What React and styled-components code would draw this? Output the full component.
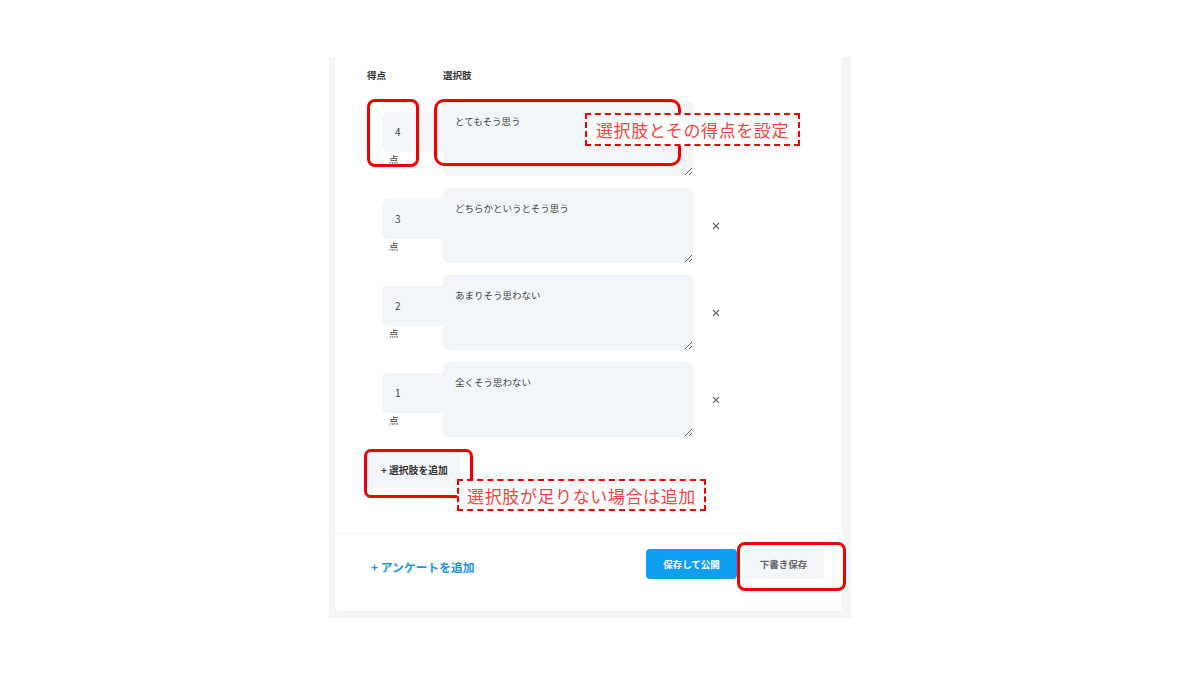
import styled, { createGlobalStyle } from 'styled-components';

const GlobalStyle = createGlobalStyle`
  body {
    margin: 0;
    background: #fff;
    font-family: "Noto Sans CJK JP", "Noto Sans", sans-serif;
  }
`;

const Page = styled.div`
  padding: 57px 0 0 329px;
`;

const Frame = styled.div`
  width: 507px;
  padding: 0 9px 7px 6px;
  background: #f5f5f5;
`;

const Card = styled.div`
  position: relative;
  background: #fff;
  border-radius: 0 0 4px 4px;
`;

const Body = styled.div`
  padding: 11px 0 45px 32px;
`;

const HeaderRow = styled.div`
  display: flex;
  font-size: 9.5px;
  font-weight: 700;
  line-height: 14px;
  color: #333;
`;

const HeadCell = styled.div`
  width: ${p => p.$w || 'auto'};
`;

const ChoiceList = styled.div`
  display: flex;
  flex-direction: column;
  gap: 12px;
  margin-top: 19px;
`;

const ChoiceRow = styled.div`
  display: flex;
  align-items: center;
  height: 75px;
`;

const ScoreCol = styled.div`
  width: 76px;
  padding-left: 15px;
  box-sizing: border-box;
  display: flex;
  flex-direction: column;
`;

const ScoreInput = styled.input`
  width: 61px;
  height: 40px;
  box-sizing: border-box;
  border: none;
  outline: none;
  border-radius: 6px 0 0 6px;
  background: #f3f6f9;
  padding: 0 0 0 13px;
  font-family: inherit;
  font-size: 10px;
  color: #444;
`;

const Unit = styled.span`
  margin-left: 7px;
  font-size: 9.5px;
  line-height: 14px;
  color: #444;
`;

const ChoiceText = styled.textarea`
  width: 250px;
  height: 75px;
  box-sizing: border-box;
  border: none;
  outline: none;
  border-radius: 6px;
  background: #f3f6f9;
  padding: 13px 12px;
  font-family: inherit;
  font-size: 9.5px;
  line-height: 14px;
  color: #444;
  resize: vertical;
`;

const RemoveBtn = styled.button`
  margin-left: 19px;
  padding: 0;
  border: none;
  background: none;
  width: 8px;
  height: 8px;
  display: flex;
  visibility: ${p => (p.$hidden ? 'hidden' : 'visible')};
`;

const AddChoice = styled.button`
  margin-top: 15px;
  width: 93px;
  height: 36px;
  border: none;
  border-radius: 4px;
  background: #f3f6f9;
  padding: 0 0 0 14px;
  text-align: left;
  font-family: inherit;
  font-size: 9.8px;
  font-weight: 700;
  color: #333;
`;

const Footer = styled.div`
  display: flex;
  align-items: center;
  border-top: 1px solid #f0f0f0;
  padding: 15px 18px 32px 36px;
`;

const AddSurvey = styled.span`
  flex: 1;
  margin-top: 5px;
  font-size: 11.8px;
  font-weight: 700;
  color: #1e96de;
`;

const Btn = styled.button`
  width: ${p => p.$w}px;
  height: 30px;
  border: none;
  border-radius: 4px;
  margin-left: ${p => p.$gap || 0}px;
  background: ${p => (p.$primary ? '#109ff0' : '#f3f6f9')};
  color: ${p => (p.$primary ? '#fff' : '#666')};
  font-family: inherit;
  font-size: 9.5px;
  font-weight: 700;
`;

const Mark = styled.div`
  position: absolute;
  left: ${p => p.$x}px;
  top: ${p => p.$y}px;
  width: ${p => p.$w}px;
  height: ${p => p.$h}px;
  box-sizing: border-box;
  border: 3px solid #ee0000;
  border-radius: ${p => p.$r}px;
  pointer-events: none;
`;

const Note = styled.div`
  position: absolute;
  left: ${p => p.$x}px;
  top: ${p => p.$y}px;
  width: ${p => p.$w}px;
  height: ${p => p.$h}px;
  box-sizing: border-box;
  border: 2px dashed #ee0000;
  background: #fff;
  display: flex;
  align-items: center;
  justify-content: center;
  font-size: 17px;
  letter-spacing: 0.6px;
  color: #f04545;
  white-space: nowrap;
`;

const CloseIcon = () => (
  <svg width="8" height="8" viewBox="0 0 8 8">
    <path d="M1 1L7 7M7 1L1 7" stroke="#666" strokeWidth="1.1" />
  </svg>
);

const choices = [
  { score: 4, text: 'とてもそう思う' },
  { score: 3, text: 'どちらかというとそう思う' },
  { score: 2, text: 'あまりそう思わない' },
  { score: 1, text: '全くそう思わない' },
];

export default function App() {
  return (
    <>
      <GlobalStyle />
      <Page>
        <Frame>
          <Card>
            <Body>
              <HeaderRow>
                <HeadCell $w="76px">得点</HeadCell>
                <HeadCell>選択肢</HeadCell>
              </HeaderRow>
              <ChoiceList>
                {choices.map((c, i) => (
                  <ChoiceRow key={c.score}>
                    <ScoreCol>
                      <ScoreInput readOnly value={c.score} />
                      <Unit>点</Unit>
                    </ScoreCol>
                    <ChoiceText readOnly value={c.text} />
                    <RemoveBtn $hidden={i === 0}>
                      <CloseIcon />
                    </RemoveBtn>
                  </ChoiceRow>
                ))}
              </ChoiceList>
              <AddChoice>+ 選択肢を追加</AddChoice>
            </Body>
            <Footer>
              <AddSurvey>+ アンケートを追加</AddSurvey>
              <Btn $primary $w={91}>保存して公開</Btn>
              <Btn $w={81} $gap={6}>下書き保存</Btn>
            </Footer>

            <Mark $x={32} $y={42} $w={52} $h={68} $r={8} />
            <Mark $x={99} $y={42} $w={247} $h={67} $r={10} />
            <Note $x={250} $y={56} $w={215} $h={33}>選択肢とその得点を設定</Note>
            <Mark $x={29} $y={392} $w={109} $h={49} $r={7} />
            <Note $x={122} $y={422} $w={249} $h={32}>選択肢が足りない場合は追加</Note>
            <Mark $x={402} $y={485} $w={109} $h={49} $r={8} />
          </Card>
        </Frame>
      </Page>
    </>
  );
}
